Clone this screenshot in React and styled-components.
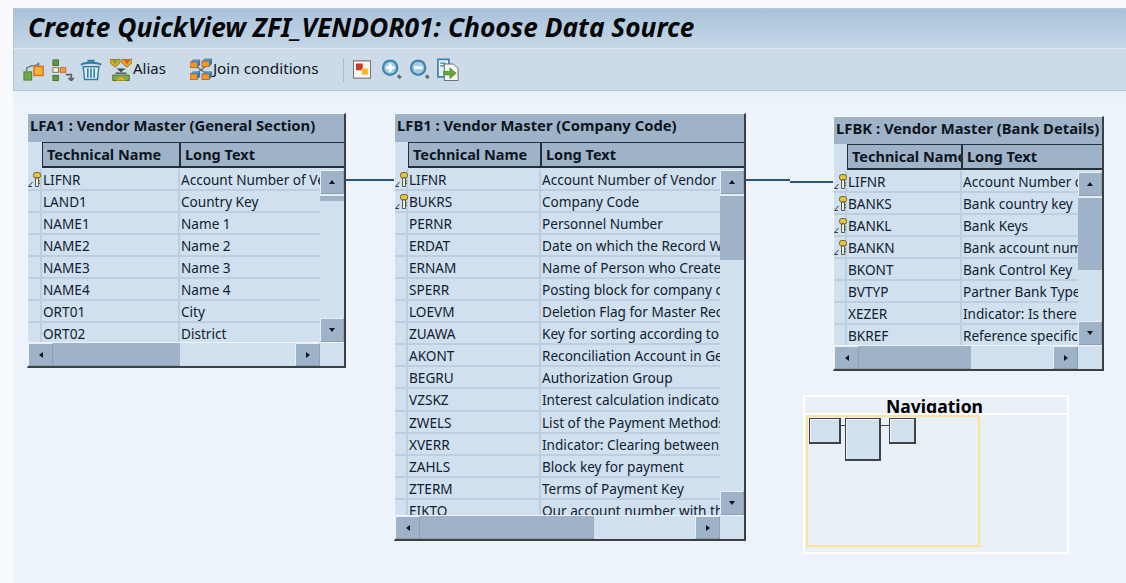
import React from "react";
import styled, { createGlobalStyle } from "styled-components";

const Global = createGlobalStyle`
  html, body { margin: 0; padding: 0; background: #f8fafd; overflow: hidden; }
  * { box-sizing: border-box; }
  #root { width: 1126px; height: 583px; font-family: "Noto Sans", "Open Sans", sans-serif; }
`;

const Page = styled.div`
  width: 1126px; height: 583px; padding: 8px 0 0 13px;
  display: flex; flex-direction: column;
`;
const TitleBar = styled.header`
  height: 41px; flex: none; padding: 2px 0 0 14px;
  background: linear-gradient(#a9c2da, #c5d7e7);
  border-top: 1px solid #b7c8d8;
  border-left: 1px solid #b4c4d3;
  border-bottom: 1px solid #dfe8f0;
`;
const Title = styled.h1`
  margin: 0; font-size: 26.3px; line-height: 33px; font-weight: 700; font-style: italic; color: #060606;
  white-space: nowrap;
`;
const Toolbar = styled.nav`
  height: 42px; flex: none; display: flex; align-items: center; padding-left: 9px;
  background: #cddbe8;
  border-left: 1px solid #b4c4d3;
  border-bottom: 1px solid #b9c8d6;
`;
const IconSlot = styled.span`
  display: inline-flex; align-items: center; width: ${p => p.$w}px; height: 24px; margin-right: ${p => p.$gap || 0}px; flex: none;
  svg { display: block; }
`;
const ToolLabel = styled.span`
  font-size: ${p => p.$size}px; color: #0d1620; line-height: 24px; margin: 0 ${p => p.$gap || 0}px 0 1px; padding-bottom: 3px; white-space: nowrap;
`;
const Separator = styled.span`
  width: 1px; height: 24px; background: #a9bccd; margin: 0 9px 0 24px; flex: none;
`;
const Canvas = styled.main`
  position: relative; flex: 1; background: linear-gradient(#e8f0f9, #edf3fb 10px);
`;
const Window = styled.section`
  position: absolute; left: ${p => p.$x - 13}px; top: ${p => p.$y - 91}px;
  width: ${p => p.$w}px; height: ${p => p.$h}px;
  display: flex; flex-direction: column;
  background: #d1e0ef;
  border-top: 1px solid #f4f8fc; border-left: 1px solid #f4f8fc;
  border-right: 2px solid #3c4043; border-bottom: 2px solid #3c4043;
`;
const WindowTitle = styled.div`
  height: ${p => p.$h}px; flex: none; padding-left: 2px;
  background: #9fb3c8; color: #0c1520;
  font-size: 14.8px; font-weight: 700; line-height: 23px; white-space: nowrap; overflow: hidden;
`;
const HeadRow = styled.div`
  height: 26px; flex: none; display: flex; padding-left: ${p => p.$lead}px;
`;
const HeadCell = styled.div`
  flex: ${p => p.$w ? `0 0 ${p.$w}px` : 1}; min-width: 0; overflow: hidden; white-space: nowrap;
  background: #9fb3c8; color: #0c1520;
  border: solid #23303a; border-width: 1px 2px 2px ${p => p.$first ? 1 : 0}px;
  ${p => p.$last && "border-right: 0;"}
  padding-left: ${p => p.$pad}px; font-size: 14.5px; font-weight: 700; line-height: 22px;
`;
const Middle = styled.div`
  flex: 1; min-height: 0; display: flex; position: relative;
`;
const Rows = styled.div`
  flex: 1; min-width: 0; overflow: hidden; padding-top: 1px;
`;
const Row = styled.div`
  height: 22.05px; display: flex; border-bottom: 2px solid #bccfe1;
`;
const KeyCell = styled.div`
  flex: 0 0 ${p => p.$w}px; border-right: 2px solid #bccfe1; position: relative;
`;
const NameCell = styled.div`
  flex: 0 0 ${p => p.$w}px; border-right: 2px solid #bccfe1; padding-left: 1px;
  font-size: 13.6px; line-height: 21px; color: #10202f; white-space: nowrap; overflow: hidden;
`;
const TextCell = styled.div`
  flex: 1; min-width: 0; padding-left: 1px;
  font-size: 13.6px; line-height: 21px; color: #10202f; white-space: nowrap; overflow: hidden;
`;
const KeyGlyph = styled.svg`
  position: absolute; left: 0; top: 3px; width: 14px; height: 15px; display: block;
`;
const VBar = styled.div`
  flex: 0 0 24px; display: flex; flex-direction: column; padding-top: 2px;
`;
const Spacer = styled.div`flex: 1;`;
const Btn = styled.div`
  background: #9fb3c8; flex: none; display: flex; align-items: center; justify-content: center;
  border: 1px solid #e8f0f7; border-right-color: #8ba0b5; border-bottom-color: #8ba0b5;
  width: ${p => p.$w}px; height: ${p => p.$h}px;
`;
const Arrow = styled.i`
  width: 0; height: 0; display: block; border-style: solid;
  ${p => p.$d === "up" && "border-width: 0 3.5px 4px; border-color: transparent transparent #10171e;"}
  ${p => p.$d === "down" && "border-width: 4px 3.5px 0; border-color: #10171e transparent transparent;"}
  ${p => p.$d === "left" && "border-width: 3.5px 4px 3.5px 0; border-color: transparent #10171e transparent transparent;"}
  ${p => p.$d === "right" && "border-width: 3.5px 0 3.5px 4px; border-color: transparent transparent transparent #10171e;"}
`;
const VThumb = styled.div`
  height: ${p => p.$h}px; flex: none; background: #9fb3c8; border-top: 2px solid #e4edf5;
`;
const HBar = styled.div`
  height: 24px; flex: none; display: flex; position: relative; background: #d1e0ef;
  border-top: 1px solid #eef4fa; padding-right: 24px;
`;
const HThumb = styled.div`
  width: ${p => p.$w}px; flex: none; background: #9fb3c8; border-bottom: 1px solid #8ba0b5;
`;
const Link = styled.div`
  position: absolute; left: ${p => p.$x - 13}px; top: ${p => p.$y - 91}px; width: ${p => p.$w}px; height: 2px;
  background: #2c5878;
`;
const Navigator = styled.aside`
  position: absolute; left: ${803 - 13}px; top: ${395 - 91}px; width: 266px; height: 159px;
  background: #fff; padding: 2px; display: flex; flex-direction: column; gap: 2px;
`;
const NavHead = styled.div`
  height: 16px; flex: none; overflow: hidden; text-align: center; background: #eaf0f7;
  font-size: 17.6px; font-weight: 700; line-height: 18px; color: #000; padding-right: 3px;
`;
const NavBody = styled.div`
  flex: 1; position: relative; background: #e9f0f6;
`;
const NavFrame = styled.div`
  position: absolute; left: 1px; top: 0; width: 174px; height: 132px; border: 2px solid #fbe19a;
`;
const MiniTable = styled.div`
  position: absolute; left: ${p => p.$x - 805}px; top: ${p => p.$y - 415}px; width: ${p => p.$w}px; height: ${p => p.$h}px;
  background: #d1e0ef; border: 1px solid #3d4347; border-right-width: 2px; border-bottom-width: 2px;
  box-shadow: inset 1px 1px 0 #f2f6fa;
`;
const MiniLink = styled.div`
  position: absolute; left: ${p => p.$x - 805}px; top: ${p => p.$y - 415}px; width: ${p => p.$w}px; height: 1px; background: #3d4347;
`;

const Svg = ({ s = 24, children }) => <svg width={s} height={s} viewBox="0 0 24 24">{children}</svg>;

const InsertIcon = () => (
  <Svg s={22}>
    <path d="M4 13V10l6-3 2 1 5-3v3" fill="none" stroke="#6a747b" strokeWidth="1.5" />
    <rect x="1" y="14" width="8.5" height="9" fill="#6cab4a" stroke="#44802f" />
    <rect x="12" y="8" width="10" height="10" fill="#f9b42a" stroke="#e0652a" strokeWidth="1.5" />
  </Svg>
);
const TreeIcon = () => (
  <Svg s={22}>
    <rect x="1" y="1" width="6" height="6" fill="#5f9a42" stroke="#3f6f2c" />
    <rect x="1" y="9.5" width="6" height="5" fill="#f6f3e6" stroke="#7c6a3a" />
    <rect x="1" y="18" width="6" height="5.5" fill="#5f9a42" stroke="#3f6f2c" />
    <rect x="9" y="9.5" width="6" height="5" fill="#f4a523" stroke="#d4552a" />
    <path d="M15 17h6v6M18 20.5l3 3 3-3" fill="none" stroke="#5d6468" strokeWidth="2" />
  </Svg>
);
const TrashIcon = () => (
  <Svg s={23}>
    <path d="M1 7c4-3 18-3 22 0" fill="none" stroke="#2f7ea6" strokeWidth="2.2" />
    <path d="M8 2.5h8" stroke="#2f7ea6" strokeWidth="2.2" />
    <path d="M3.5 9h17L19 23H5z" fill="#e1eef6" stroke="#2f7ea6" strokeWidth="1.6" />
    <path d="M8.5 11v10M12 11v10M15.5 11v10" stroke="#2f7ea6" strokeWidth="1.8" />
  </Svg>
);
const AliasIcon = () => (
  <Svg s={23}>
    <path d="M0 1h11v3.5l-5.5 5L0 4.5zM13 1h11v3.5l-5.5 5L13 4.5z" fill="#f2a51f" stroke="#7c7a28" />
    <path d="M2 1.5l3.5 5 3.5-5z" fill="#7ba93f" />
    <path d="M15 1.5l3.5 5 3.5-5z" fill="#e25c28" />
    <path d="M7 11h10l-5 4z" fill="#414a4f" />
    <path d="M6 16h12" stroke="#414a4f" strokeWidth="1.5" />
    <path d="M3 18h18v6H3z" fill="#7bab45" stroke="#4a6f28" />
    <path d="M6 24l6-4.5 6 4.5z" fill="#f2a51f" />
  </Svg>
);
const Block = ({ x, y }) => (
  <g>
    <path d={`M${x} ${y + 3}l3-3h8l-3 3z`} fill="#4f93bd" />
    <rect x={x} y={y + 3} width="8" height="6" fill="#f39a1d" stroke="#c9562a" strokeWidth=".9" />
    <path d={`M${x + 8} ${y + 3}l3-3v6l-3 3z`} fill="#2d7aa8" />
  </g>
);
const JoinIcon = () => (
  <Svg s={23}>
    <path d="M6 8l12 9M18 8L6 17" stroke="#5a646b" strokeWidth="1.3" />
    <Block x={0} y={1} /><Block x={13} y={0} /><Block x={0} y={14} /><Block x={13} y={14} />
  </Svg>
);
const ColorIcon = () => (
  <Svg s={19}>
    <rect x=".5" y=".5" width="23" height="23" fill="#f7f7f5" stroke="#5f6164" strokeWidth="1.3" />
    <rect x="4" y="4" width="9" height="9" fill="#c83a22" />
    <rect x="12" y="11" width="8" height="8" fill="#f5b31f" stroke="#f8dc8a" />
  </Svg>
);
const ZoomIcon = ({ minus }) => (
  <Svg s={23}>
    <circle cx="10" cy="10" r="9" fill="#3f86ac" />
    <circle cx="10" cy="10" r="6.5" fill="#a9cde0" />
    <path d="M5.5 10h9" stroke="#f5fafd" strokeWidth="3.2" />
    {!minus && <path d="M10 5.5v9" stroke="#f5fafd" strokeWidth="3.2" />}
    <path d="M18.5 18.5l3 3" stroke="#666b70" strokeWidth="3.5" />
  </Svg>
);
const ExportIcon = () => (
  <Svg s={23}>
    <path d="M1 1h12v19H1z" fill="#e9f2f8" stroke="#3882ab" strokeWidth="1.8" />
    <path d="M3.5 5h6M3.5 8h6" stroke="#3882ab" strokeWidth="1.5" />
    <path d="M8 6h10l5 5v13H8z" fill="#f6f6f2" stroke="#5d6468" />
    <path d="M7 14h7v-4l7 6-7 6v-4H7z" fill="#62a63b" stroke="#3f7a28" strokeWidth=".6" />
  </Svg>
);
const Key = () => (
  <KeyGlyph viewBox="0 0 14 15">
    <path d="M4.5 10L.5 14.5h3.500" fill="none" stroke="#3a3f42" strokeWidth="1" />
    <rect x="5.5" y=".5" width="7" height="5.5" rx="2.2" fill="#e9c53a" stroke="#6d6330" />
    <path d="M7.5 6h3v8.5h-3z" fill="#f5f0d0" stroke="#454a4c" strokeWidth=".9" />
    <path d="M10.5 9h1.5M10.5 11.5h1.500" stroke="#454a4c" strokeWidth=".9" />
  </KeyGlyph>
);

const LFA1 = [["LIFNR","Account Number of Vendor or Creditor",1],["LAND1","Country Key"],["NAME1","Name 1"],["NAME2","Name 2"],["NAME3","Name 3"],["NAME4","Name 4"],["ORT01","City"],["ORT02","District"]];
const LFB1 = [["LIFNR","Account Number of Vendor or Creditor",1],["BUKRS","Company Code",1],["PERNR","Personnel Number"],["ERDAT","Date on which the Record Was Created"],["ERNAM","Name of Person who Created the Object"],["SPERR","Posting block for company code"],["LOEVM","Deletion Flag for Master Record"],["ZUAWA","Key for sorting according to assignment"],["AKONT","Reconciliation Account in General Ledger"],["BEGRU","Authorization Group"],["VZSKZ","Interest calculation indicator"],["ZWELS","List of the Payment Methods to be Considered"],["XVERR","Indicator: Clearing between customer"],["ZAHLS","Block key for payment"],["ZTERM","Terms of Payment Key"],["EIKTO","Our account number with the vendor"]];
const LFBK = [["LIFNR","Account Number of Vendor",1],["BANKS","Bank country key",1],["BANKL","Bank Keys",1],["BANKN","Bank account number",1],["BKONT","Bank Control Key"],["BVTYP","Partner Bank Type"],["XEZER","Indicator: Is there collection"],["BKREF","Reference specifications"]];

function Table({ x, y, w, h, title, rows, lead, nameW, vThumb, hThumb, titleH = 28 }) {
  return (
    <Window $x={x} $y={y} $w={w} $h={h}>
      <WindowTitle $h={titleH}>{title}</WindowTitle>
      <HeadRow $lead={lead}>
        <HeadCell $w={nameW} $first $pad={4}>Technical Name</HeadCell>
        <HeadCell $last $pad={4}>Long Text</HeadCell>
      </HeadRow>
      <Middle>
        <Rows>
          {rows.map(([n, t, k]) => (
            <Row key={n}>
              <KeyCell $w={lead}>{k && <Key />}</KeyCell>
              <NameCell $w={nameW - 1}>{n}</NameCell>
              <TextCell>{t}</TextCell>
            </Row>
          ))}
        </Rows>
        <VBar>
          <Btn $w={24} $h={24}><Arrow $d="up" /></Btn>
          <VThumb $h={vThumb} />
          <Spacer />
          <Btn $w={24} $h={24}><Arrow $d="down" /></Btn>
        </VBar>
      </Middle>
      <HBar>
        <Btn $w={25} $h={23}><Arrow $d="left" /></Btn>
        <HThumb $w={hThumb} />
        <Spacer />
        <Btn $w={25} $h={23}><Arrow $d="right" /></Btn>
      </HBar>
    </Window>
  );
}

export default function App() {
  return (
    <Page>
      <Global />
      <TitleBar><Title>Create QuickView ZFI_VENDOR01: Choose Data Source</Title></TitleBar>
      <Toolbar>
        <IconSlot $w={22} $gap={7}><InsertIcon /></IconSlot>
        <IconSlot $w={22} $gap={6}><TreeIcon /></IconSlot>
        <IconSlot $w={22} $gap={8}><TrashIcon /></IconSlot>
        <IconSlot $w={22}><AliasIcon /></IconSlot>
        <ToolLabel $size={15} $gap={24}>Alias</ToolLabel>
        <IconSlot $w={22}><JoinIcon /></IconSlot>
        <ToolLabel $size={15.3}>Join conditions</ToolLabel>
        <Separator />
        <IconSlot $w={18} $gap={10}><ColorIcon /></IconSlot>
        <IconSlot $w={22} $gap={6}><ZoomIcon /></IconSlot>
        <IconSlot $w={22} $gap={6}><ZoomIcon minus /></IconSlot>
        <IconSlot $w={22}><ExportIcon /></IconSlot>
      </Toolbar>
      <Canvas>
        <Link $x={345} $y={179} $w={51} />
        <Link $x={745} $y={179} $w={45} />
        <Link $x={790} $y={181} $w={44} />
        <Table x={27} y={113} w={319} h={255} title="LFA1 : Vendor Master (General Section)" rows={LFA1} lead={14} nameW={139} vThumb={7} hThumb={127} />
        <Table x={394} y={113} w={352} h={428} title="LFB1 : Vendor Master (Company Code)" rows={LFB1} lead={13} nameW={134} vThumb={66} hThumb={174} />
        <Table x={833} y={116} w={271} h={255} titleH={27} title="LFBK : Vendor Master (Bank Details)" rows={LFBK} lead={13} nameW={116} vThumb={74} hThumb={112} />
        <Navigator>
          <NavHead>Navigation</NavHead>
          <NavBody>
            <NavFrame />
            <MiniLink $x={841} $y={425} $w={5} />
            <MiniLink $x={881} $y={425} $w={9} />
            <MiniTable $x={809} $y={418} $w={32} $h={26} />
            <MiniTable $x={845} $y={418} $w={36} $h={43} />
            <MiniTable $x={889} $y={418} $w={27} $h={26} />
          </NavBody>
        </Navigator>
      </Canvas>
    </Page>
  );
}
